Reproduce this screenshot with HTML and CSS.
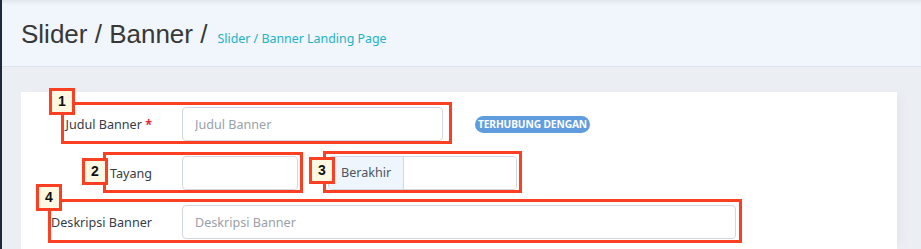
FILE: index.html
```html
<html>
<head>
<meta charset="utf-8">
<title>Slider / Banner</title>
<link rel="stylesheet" href="styles.css">
</head>
<body>
	<div class="page-header">
		<h1>Slider / Banner /<small>Slider / Banner Landing Page</small></h1>
	</div>

	<div class="content">
		<div class="card">
			<div class="row">
				<label class="label">Judul Banner <span class="req">*</span></label>
				<input class="input judul" type="text" placeholder="Judul Banner">
				<span class="pill">TERHUBUNG DENGAN</span>
			</div>

			<div class="row">
				<label class="label">Tayang</label>
				<input class="input tayang" type="text">
				<div class="group">
					<span class="addon">Berakhir</span>
					<input class="group-input" type="text">
				</div>
			</div>

			<div class="row">
				<label class="label">Deskripsi Banner</label>
				<input class="input deskripsi" type="text" placeholder="Deskripsi Banner">
			</div>

			<div class="mark box-1"></div>
			<div class="mark box-2"></div>
			<div class="mark box-3"></div>
			<div class="mark box-4"></div>
			<div class="num num-1">1</div>
			<div class="num num-2">2</div>
			<div class="num num-3">3</div>
			<div class="num num-4">4</div>
		</div>
	</div>
</body>
</html>
```

FILE: styles.css
```css
* {
	box-sizing: border-box;
}

body {
	margin: 0;
	background-color: #ebeef3;
	border-left: 2px solid #1d2a3b;
	font-family: "Noto Sans", sans-serif;
}

.page-header {
	height: 67px;
	padding: 19px 0 0 19px;
	background-color: #f0f6fc;
	border-bottom: 1px solid #dde4ec;
	box-shadow: inset 0 4px 4px -2px rgba(0, 0, 0, 0.08);
}

h1 {
	margin: 0;
	font-family: "Liberation Sans", Arial, sans-serif;
	font-size: 26px;
	font-weight: normal;
	line-height: 30px;
	color: #383838;
}

h1 small {
	margin-left: 10px;
	font-family: "Noto Sans", sans-serif;
	font-size: 12.4px;
	color: #22b3c4;
}

.content {
	padding: 25px 24px 0 19px;
}

.card {
	position: relative;
	background-color: #fff;
	padding-top: 15px;
	height: 157px;
	box-shadow: 8px 0 10px -4px rgba(0, 0, 0, 0.04);
}

.row {
	display: flex;
	align-items: center;
	height: 34px;
	margin-bottom: 15px;
}

.label {
	width: 131px;
	margin-right: 30px;
	text-align: right;
	font-size: 12.6px;
	color: #363b47;
}

.req {
	color: #e8262d;
	font-weight: bold;
}

.input {
	height: 34px;
	padding: 0 12px;
	border: 1px solid #d3d7e1;
	border-radius: 4px;
	font-family: "Noto Sans", sans-serif;
	font-size: 12.6px;
	color: #555;
	outline: none;
}

.input::placeholder {
	color: #9a9fa8;
}

.judul {
	width: 261px;
}

.tayang {
	width: 116px;
}

.deskripsi {
	width: 554px;
}

.pill {
	margin-left: 32px;
	width: 115px;
	height: 17px;
	line-height: 17px;
	border-radius: 9px;
	background-color: #609ddf;
	color: #fff;
	font-size: 10.2px;
	font-weight: bold;
	text-align: center;
	letter-spacing: -0.1px;
}

.group {
	display: flex;
	margin-left: 30px;
	width: 189px;
	height: 34px;
	border: 1px solid #d3d7e1;
	border-radius: 4px;
	overflow: hidden;
}

.addon {
	width: 75px;
	padding-left: 12px;
	line-height: 32px;
	background-color: #eef5fd;
	border-right: 1px solid #d3d7e1;
	font-size: 12.6px;
	color: #4b5563;
}

.group-input {
	flex: 1;
	border: none;
	outline: none;
	min-width: 0;
}

.mark {
	position: absolute;
	border: 3px solid #fb3f22;
}

.box-1 { left: 40px; top: 10px; width: 391px; height: 42px; }
.box-2 { left: 82px; top: 60px; width: 200px; height: 41px; }
.box-3 { left: 302px; top: 59px; width: 199px; height: 42px; }
.box-4 { left: 27px; top: 107px; width: 694px; height: 44px; }

.num {
	position: absolute;
	width: 26px;
	height: 27px;
	border: 3px solid #fb3f22;
	background-color: #fdf8e2;
	font-family: "Liberation Sans", Arial, sans-serif;
	font-size: 14px;
	font-weight: bold;
	line-height: 21px;
	text-align: center;
	color: #111;
}

.num-1 { left: 28px; top: -4px; }
.num-2 { left: 61px; top: 66px; }
.num-3 { left: 288px; top: 65px; }
.num-4 { left: 15px; top: 92px; }
```
